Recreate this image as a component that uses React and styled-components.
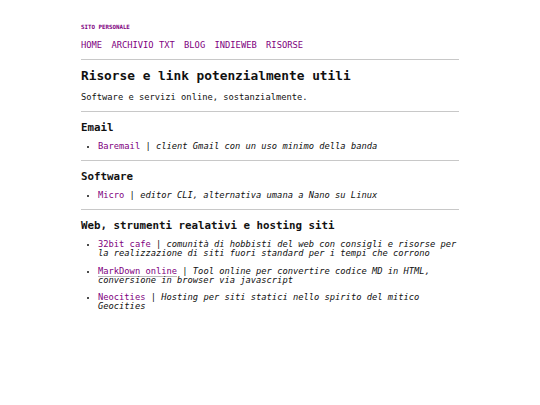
import React from 'react';
import styled, { createGlobalStyle } from 'styled-components';

const Global = createGlobalStyle`
  html, body {
    margin: 0;
    padding: 0;
    background: #fff;
  }
  body {
    font-family: "DejaVu Sans Mono", "Liberation Mono", monospace;
    font-size: 8.75px;
    color: #111;
  }
`

const Page = styled.div`
  width: 70%;
  margin: 0 auto;
  padding-top: 23px;
`

const SiteTitle = styled.div`
  font-size: 5.8px;
  line-height: 8px;
  font-weight: bold;
  color: #800080;
  text-transform: uppercase;
`

const Nav = styled.nav`
  display: flex;
  gap: 9.4px;
  margin-top: 9px;
  line-height: 10px;
`

const NavLink = styled.a`
  color: #800080;
  text-decoration: none;
`

const Rule = styled.hr`
  border: 0;
  height: 1px;
  background: #c8c8c8;
  margin: ${p => p.$top || 9}px 0 0 0;
`

const Title = styled.h1`
  font-size: 12.8px;
  line-height: 15px;
  margin: 7.5px 0 0 0;
  font-weight: bold;
`

const Intro = styled.p`
  margin: 9.5px 0 0 0;
  line-height: 10px;
`

const SectionTitle = styled.h2`
  font-size: 10.8px;
  line-height: 13px;
  margin: 8.5px 0 0 0;
  font-weight: bold;
`

const List = styled.ul`
  margin: 8.5px 0 0 0;
  padding-left: 17px;
  display: flex;
  flex-direction: column;
  gap: 8.5px;
`

const Item = styled.li`
  line-height: 9px;
  &::marker {
    font-size: 7px;
  }
`

const Link = styled.a`
  color: #800080;
  text-decoration: ${p => (p.$underline ? 'underline' : 'none')};
  text-decoration-color: #b9b9b9;
  text-underline-offset: 1.5px;
`

const Desc = styled.em`
  font-style: italic;
`

const nav = ['HOME', 'ARCHIVIO TXT', 'BLOG', 'INDIEWEB', 'RISORSE'];

const sections = [
  {
    title: 'Email',
    items: [{ name: 'Baremail', desc: 'client Gmail con un uso minimo della banda' }],
  },
  {
    title: 'Software',
    items: [{ name: 'Micro', desc: 'editor CLI, alternativa umana a Nano su Linux' }],
  },
  {
    title: 'Web, strumenti realativi e hosting siti',
    items: [
      { name: '32bit cafe', desc: 'comunità di hobbisti del web con consigli e risorse per la realizzazione di siti fuori standard per i tempi che corrono' },
      { name: 'MarkDown online', desc: 'Tool online per convertire codice MD in HTML, conversione in browser via javascript', underline: true },
      { name: 'Neocities', desc: 'Hosting per siti statici nello spirito del mitico Geocities' },
    ],
  },
];

export default function App() {
  return (
    <>
      <Global />
      <Page>
        <SiteTitle>Sito personale</SiteTitle>
        <Nav>
          {nav.map(n => <NavLink key={n} href="#">{n}</NavLink>)}
        </Nav>
        <Rule />
        <Title>Risorse e link potenzialmente utili</Title>
        <Intro>Software e servizi online, sostanzialmente.</Intro>
        {sections.map((s, i) => (
          <section key={s.title}>
            <Rule $top={i === 0 ? 9 : 9} />
            <SectionTitle>{s.title}</SectionTitle>
            <List>
              {s.items.map(it => (
                <Item key={it.name}>
                  <Link href="#" $underline={it.underline}>{it.name}</Link> | <Desc>{it.desc}</Desc>
                </Item>
              ))}
            </List>
          </section>
        ))}
      </Page>
    </>
  )
}
